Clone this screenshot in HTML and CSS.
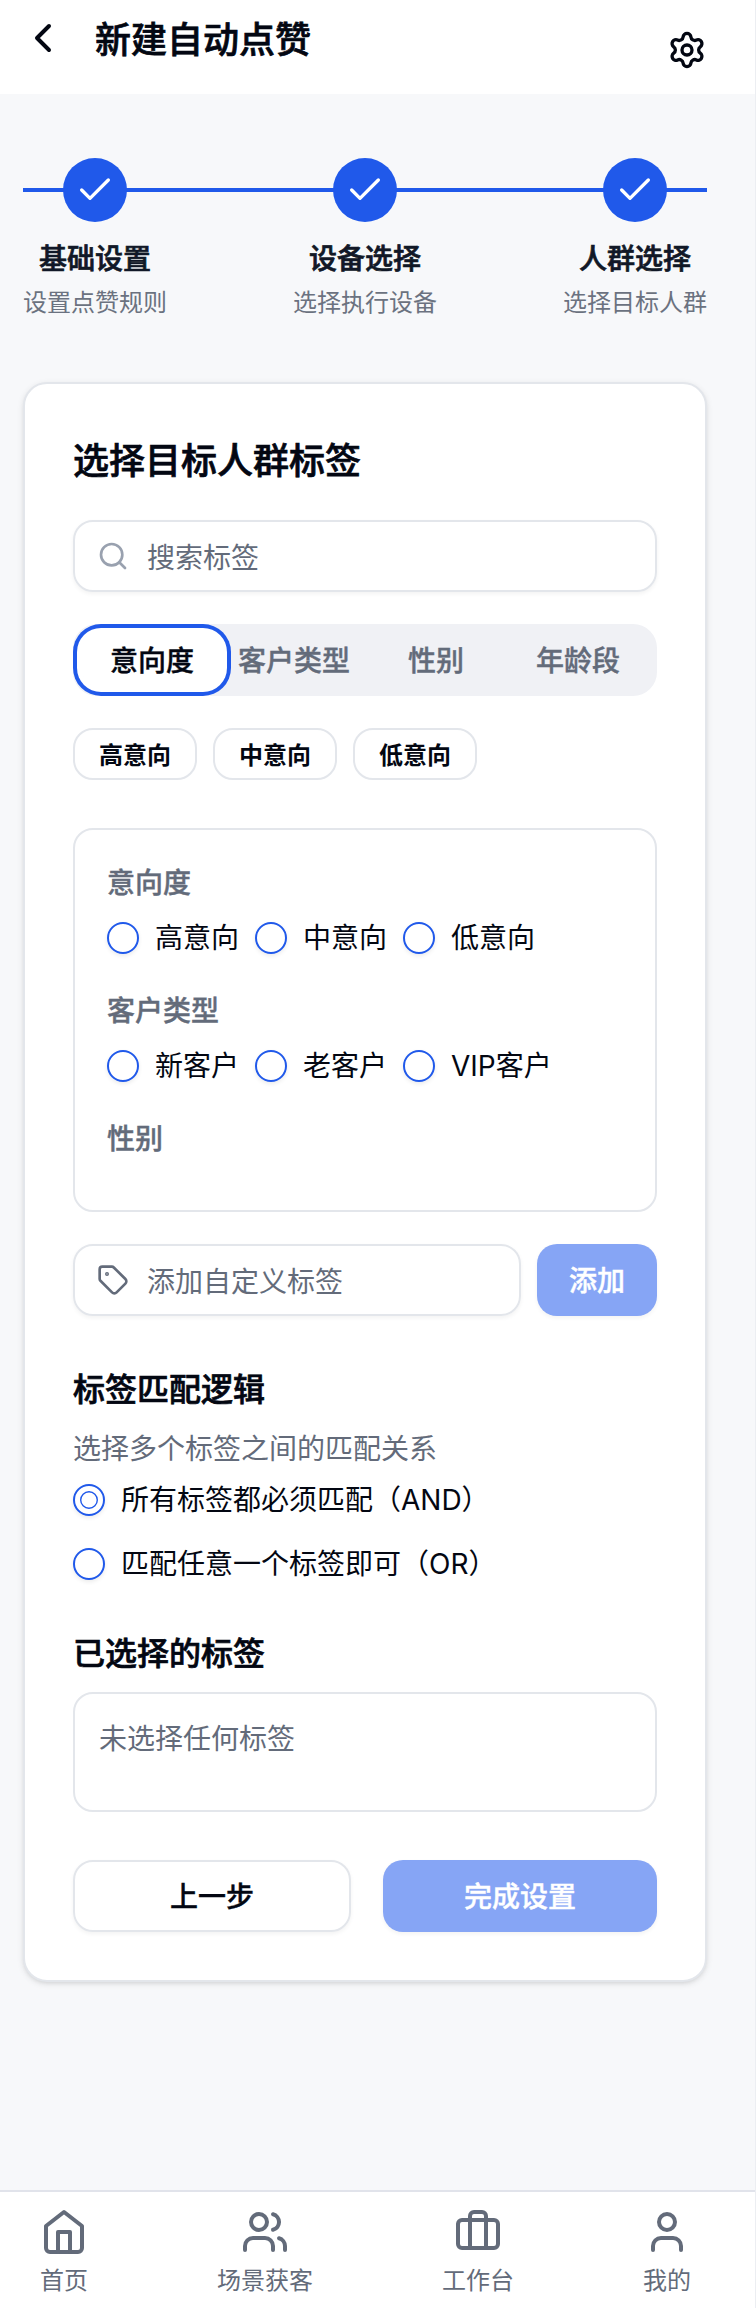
FILE: index.html
```html
<!DOCTYPE html>
<html lang="zh-CN">
<head>
<meta charset="utf-8">
<title>新建自动点赞</title>
<link rel="stylesheet" href="styles.css">
</head>
<body>
<div class="page">
  <header class="header">
    <div class="header-left">
      <svg class="icon i48" viewBox="0 0 24 24"><path d="m15 18-6-6 6-6"/></svg>
      <h1 class="title">新建自动点赞</h1>
    </div>
    <svg class="icon i40 gear" viewBox="0 0 24 24"><path d="M9.671 4.136a2.34 2.34 0 0 1 4.659 0 2.34 2.34 0 0 0 3.319 1.915 2.34 2.34 0 0 1 2.33 4.033 2.34 2.34 0 0 0 0 3.831 2.34 2.34 0 0 1-2.33 4.033 2.34 2.34 0 0 0-3.319 1.915 2.34 2.34 0 0 1-4.659 0 2.34 2.34 0 0 0-3.32-1.915 2.34 2.34 0 0 1-2.33-4.033 2.34 2.34 0 0 0 0-3.831A2.34 2.34 0 0 1 6.35 6.051a2.34 2.34 0 0 0 3.319-1.915"/><circle cx="12" cy="12" r="3"/></svg>
  </header>

  <main class="main">
    <div class="steps">
      <div class="step">
        <div class="step-dot"><svg class="icon i40" viewBox="0 0 24 24"><path d="M20 6 9 17l-5-5"/></svg></div>
        <div class="step-name">基础设置</div>
        <div class="step-desc">设置点赞规则</div>
      </div>
      <div class="step">
        <div class="step-dot"><svg class="icon i40" viewBox="0 0 24 24"><path d="M20 6 9 17l-5-5"/></svg></div>
        <div class="step-name">设备选择</div>
        <div class="step-desc">选择执行设备</div>
      </div>
      <div class="step">
        <div class="step-dot"><svg class="icon i40" viewBox="0 0 24 24"><path d="M20 6 9 17l-5-5"/></svg></div>
        <div class="step-name">人群选择</div>
        <div class="step-desc">选择目标人群</div>
      </div>
    </div>

    <section class="card">
      <h2 class="card-title">选择目标人群标签</h2>
      <div class="field">
        <svg class="icon i32 search" viewBox="0 0 24 24"><circle cx="11" cy="11" r="8"/><path d="m21 21-4.3-4.3"/></svg>
        <span>搜索标签</span>
      </div>
      <div class="tabs">
        <div class="tab active">意向度</div>
        <div class="tab">客户类型</div>
        <div class="tab">性别</div>
        <div class="tab">年龄段</div>
      </div>
      <div class="chips">
        <div class="chip">高意向</div>
        <div class="chip">中意向</div>
        <div class="chip">低意向</div>
      </div>
      <div class="groups">
        <div class="group">
          <div class="group-name">意向度</div>
          <div class="options">
            <label class="option"><span class="radio"></span>高意向</label>
            <label class="option"><span class="radio"></span>中意向</label>
            <label class="option"><span class="radio"></span>低意向</label>
          </div>
        </div>
        <div class="group">
          <div class="group-name">客户类型</div>
          <div class="options">
            <label class="option"><span class="radio"></span>新客户</label>
            <label class="option"><span class="radio"></span>老客户</label>
            <label class="option"><span class="radio"></span>VIP客户</label>
          </div>
        </div>
        <div class="group">
          <div class="group-name">性别</div>
        </div>
      </div>
      <div class="custom">
        <div class="field">
          <svg class="icon i32 tag" viewBox="0 0 24 24"><path d="M12.586 2.586A2 2 0 0 0 11.172 2H4a2 2 0 0 0-2 2v7.172a2 2 0 0 0 .586 1.414l8.704 8.704a2.426 2.426 0 0 0 3.42 0l6.58-6.58a2.426 2.426 0 0 0 0-3.42z"/><circle cx="7.5" cy="7.5" r=".5" fill="currentColor"/></svg>
          <span>添加自定义标签</span>
        </div>
        <div class="button primary">添加</div>
      </div>
      <h3 class="subtitle logic">标签匹配逻辑</h3>
      <p class="hint">选择多个标签之间的匹配关系</p>
      <div class="logic-options">
        <label class="option"><span class="radio"><svg class="radio-ring" viewBox="0 0 20 20"><circle cx="10" cy="10" r="8.3"/></svg></span>所有标签都必须匹配（AND）</label>
        <label class="option"><span class="radio"></span>匹配任意一个标签即可（OR）</label>
      </div>
      <h3 class="subtitle selected">已选择的标签</h3>
      <div class="empty">未选择任何标签</div>
      <div class="actions">
        <div class="button outline">上一步</div>
        <div class="button primary finish">完成设置</div>
      </div>
    </section>
  </main>

  <nav class="nav">
    <div class="nav-item">
      <svg class="icon i48" viewBox="0 0 24 24"><path d="m3 9 9-7 9 7v11a2 2 0 0 1-2 2H5a2 2 0 0 1-2-2z"/><path d="M9 22V12h6v10"/></svg>
      <span>首页</span>
    </div>
    <div class="nav-item">
      <svg class="icon i48" viewBox="0 0 24 24"><path d="M16 21v-2a4 4 0 0 0-4-4H6a4 4 0 0 0-4 4v2"/><circle cx="9" cy="7" r="4"/><path d="M22 21v-2a4 4 0 0 0-3-3.87"/><path d="M16 3.13a4 4 0 0 1 0 7.75"/></svg>
      <span>场景获客</span>
    </div>
    <div class="nav-item">
      <svg class="icon i48" viewBox="0 0 24 24"><path d="M16 20V4a2 2 0 0 0-2-2h-4a2 2 0 0 0-2 2v16"/><rect x="2" y="6" width="20" height="14" rx="2"/></svg>
      <span>工作台</span>
    </div>
    <div class="nav-item">
      <svg class="icon i48" viewBox="0 0 24 24"><path d="M19 21v-2a4 4 0 0 0-4-4H9a4 4 0 0 0-4 4v2"/><circle cx="12" cy="7" r="4"/></svg>
      <span>我的</span>
    </div>
  </nav>
</div>
</body>
</html>
```
FILE: styles.css
```css
* { box-sizing: border-box; margin: 0; padding: 0; }
body {
  background: #f7f8fa;
  color: #030712;
  font-family: "Noto Sans CJK SC", sans-serif;
  font-size: 28px;
  line-height: 40px;
}
.page { display: flex; flex-direction: column; width: 756px; height: 2308px; border-right: 1px solid #eceef2; }
.icon { display: block; flex: none; fill: none; stroke: currentColor; stroke-width: 2; stroke-linecap: round; stroke-linejoin: round; }
.i32 { width: 32px; height: 32px; }
.i40 { width: 40px; height: 40px; }
.i48 { width: 48px; height: 48px; }

.title, .card-title, .subtitle, .step-name { font-weight: 500; -webkit-text-stroke: .7px currentColor; }
.tab, .group-name, .button { font-weight: 500; -webkit-text-stroke: .4px currentColor; }

.header { display: flex; justify-content: space-between; align-items: flex-start; height: 94px; padding: 14px 48px 0 19px; background: #fff; }
.header-left { display: flex; align-items: center; gap: 28px; }
.title { height: 48px; font-size: 36px; line-height: 46px; }
.gear { margin-top: 16px; }

.main { flex: 1; padding: 64px 48px 0 23px; }
.steps {
  display: flex;
  justify-content: space-between;
  height: 224px;
  background: linear-gradient(#2059ea, #2059ea) 0 30px / 100% 4px no-repeat;
}
.step { display: flex; flex-direction: column; align-items: center; }
.step-dot { display: flex; align-items: center; justify-content: center; width: 64px; height: 64px; border-radius: 50%; background: #2059ea; color: #fff; }
.step-name { margin-top: 15px; color: #111827; }
.step-desc { margin-top: 8px; font-size: 24px; line-height: 32px; color: #6b7280; }

.card {
  height: 1600px;
  padding: 48px;
  border: 2px solid #e3e6eb;
  border-radius: 24px;
  background: #fff;
  box-shadow: 0 2px 6px rgba(0, 0, 0, .1), 0 2px 4px -2px rgba(0, 0, 0, .1);
}
.card-title { height: 56px; font-size: 36px; line-height: 52px; }
.field {
  display: flex;
  align-items: center;
  gap: 18px;
  height: 72px;
  padding: 0 22px;
  border: 2px solid #e3e6eb;
  border-radius: 20px;
  box-shadow: 0 2px 4px rgba(0, 0, 0, .05);
  color: #636b7a;
}
.card-title + .field { margin-top: 32px; }
.search { color: #99a1af; }
.tabs { display: grid; grid-template-columns: repeat(4, 1fr); height: 72px; margin-top: 32px; padding: 8px; border-radius: 24px; background: #f0f1f5; }
.tab { line-height: 54px; text-align: center; color: #636b7a; }
.tab.active { border-radius: 20px; background: #fff; color: #030712; box-shadow: 0 0 0 4px #fff, 0 0 0 8px #2059ea; }
.chips { display: flex; gap: 16px; margin-top: 32px; }
.chip { width: 124px; height: 52px; border: 2px solid #e3e6eb; border-radius: 20px; font-size: 24px; font-weight: 600; line-height: 47px; text-align: center; }

.groups { display: flex; flex-direction: column; gap: 32px; height: 384px; margin-top: 48px; padding: 32px; border: 2px solid #e3e6eb; border-radius: 20px; }
.group-name { line-height: 38px; padding-bottom: 2px; color: #636b7a; }
.options { display: flex; gap: 16px; margin-top: 16px; }
.option { display: flex; align-items: center; gap: 16px; font-family: Inter, "Noto Sans CJK SC", sans-serif; }
.radio { display: flex; align-items: center; justify-content: center; width: 32px; height: 32px; border: 2px solid #2059ea; border-radius: 50%; box-shadow: 0 2px 4px rgba(0, 0, 0, .08); }
.radio-ring { display: block; flex: none; width: 20px; height: 20px; fill: none; stroke: #2059ea; stroke-width: 1.4; }

.custom { display: flex; gap: 16px; margin-top: 32px; }
.custom .field { flex: 1; }
.button { height: 72px; border-radius: 20px; line-height: 71px; text-align: center; box-shadow: 0 2px 4px rgba(0, 0, 0, .05); }
.primary { width: 120px; background: #86a5f5; color: #fff; }
.outline { flex: 1; border: 2px solid #e3e6eb; line-height: 67px; }
.subtitle { font-size: 32px; line-height: 48px; }
.logic { margin-top: 47px; }
.hint { margin-top: 16px; color: #636b7a; }
.logic-options { display: flex; flex-direction: column; gap: 24px; margin-top: 13px; }
.selected { margin-top: 43px; }
.empty { height: 120px; margin-top: 17px; padding: 23px 24px; border: 2px solid #e3e6eb; border-radius: 20px; color: #636b7a; }
.actions { display: flex; gap: 32px; margin-top: 48px; }
.finish { width: 274px; }

.nav { display: flex; justify-content: space-between; height: 118px; padding: 16px 64px 0 40px; border-top: 2px solid #e1e3eb; background: #fff; color: #636b7a; }
.nav-item { display: flex; flex-direction: column; align-items: center; gap: 7px; font-size: 24px; line-height: 32px; }
```
